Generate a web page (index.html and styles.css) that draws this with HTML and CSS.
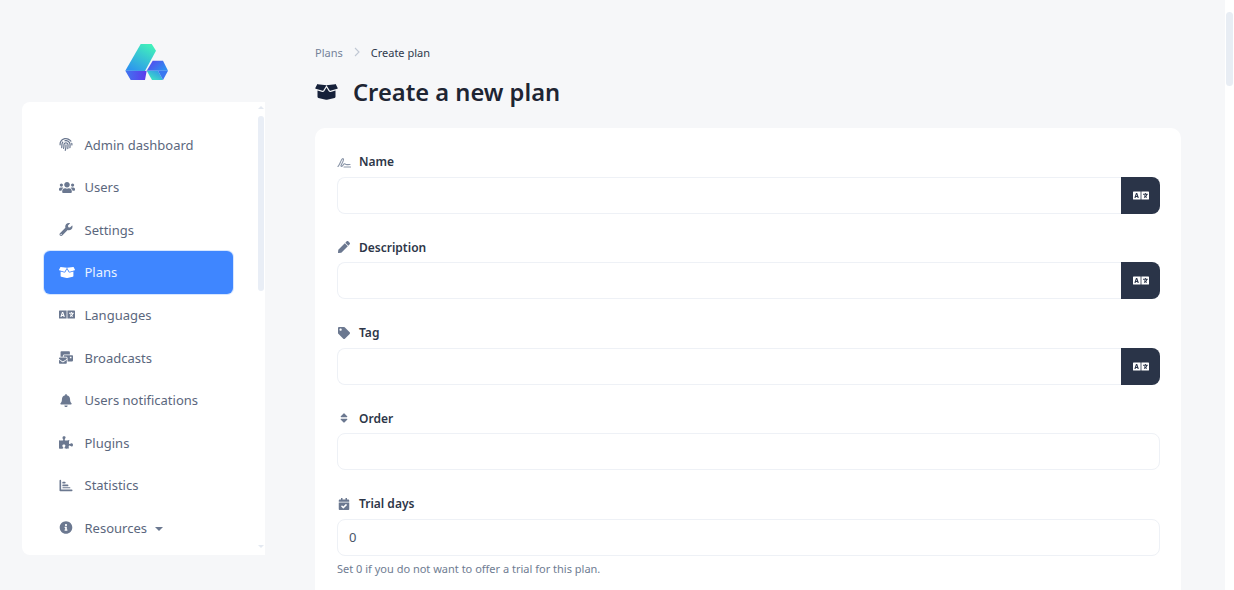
FILE: index.html
```html
<!DOCTYPE html>
<html lang="en">
<head>
<meta charset="utf-8">
<title>Create plan</title>
<link rel="stylesheet" href="styles.css">
</head>
<body>
<svg class="sprite" xmlns="http://www.w3.org/2000/svg">
  <defs>
    <symbol id="i-box" viewBox="0 0 640 512"><path d="M425.7 256c-16.9 0-32.8-9-41.4-23.4L320 126l-64.2 106.6c-8.7 14.5-24.6 23.5-41.5 23.5-4.5 0-9-.6-13.3-1.9L64 215v178c0 14.7 10 27.5 24.2 31l216.2 54.1c10.2 2.5 20.9 2.5 31 0L551.8 424c14.2-3.6 24.2-16.4 24.2-31V215l-137 39.1c-4.3 1.3-8.8 1.9-13.3 1.9zm212.6-112.2L586.8 41c-3.1-6.2-9.8-9.8-16.7-8.9L320 64l91.7 152.1c3.8 6.3 11.4 9.3 18.5 7.3l197.9-56.5c9.9-2.9 14.7-13.9 10.2-23.1zM53.2 41L1.7 143.8c-4.6 9.2.3 20.2 10.1 23l197.9 56.5c7.1 2 14.7-1 18.5-7.3L320 64 69.8 32.1c-6.9-.8-13.5 2.7-16.6 8.9z"/></symbol>
    <symbol id="i-finger" viewBox="0 0 512 512"><path d="M256.12 245.96c-13.25 0-24 10.74-24 24 1.14 72.25-8.14 141.9-27.7 211.55-2.73 9.72 2.15 30.49 23.12 30.49 10.48 0 20.11-6.92 23.09-17.52 13.53-47.91 31.04-125.41 29.48-224.52.01-13.25-10.73-24-23.99-24zm-.86-81.73C194 164.16 151.25 211.3 152.1 265.32c.75 47.94-3.75 95.91-13.37 142.55-2.69 12.98 5.67 25.69 18.64 28.36 13.05 2.67 25.67-5.66 28.36-18.64 10.34-50.09 15.17-101.58 14.37-153.02-.41-25.95 19.92-52.49 54.45-52.34 31.31.47 57.15 25.34 57.62 55.47.77 48.05-2.81 96.33-10.61 143.55-2.17 13.06 6.69 25.42 19.76 27.58 19.97 3.33 26.81-15.1 27.58-19.77 8.28-50.03 12.06-101.21 11.27-152.11-.88-55.8-47.94-101.88-104.91-102.72zm-110.69-19.78c-10.3-8.34-25.37-6.8-33.76 3.48-25.62 31.5-39.39 71.28-38.75 112 .59 37.58-2.47 75.27-9.11 112.05-2.34 13.05 6.31 25.53 19.36 27.89 20.11 3.5 27.07-14.81 27.89-19.36 7.19-39.84 10.5-80.66 9.86-121.33-.47-29.88 9.2-57.88 28-80.97 8.35-10.28 6.79-25.39-3.49-33.76zm109.47-62.33c-15.41-.41-30.87 1.44-45.78 4.97-12.89 3.06-20.87 15.98-17.83 28.89 3.06 12.89 16 20.83 28.89 17.83 11.05-2.61 22.47-3.77 34-3.69 75.43 1.13 137.73 61.5 138.88 134.58.59 37.88-1.28 76.11-5.58 113.63-1.5 13.17 7.95 25.08 21.11 26.58 16.72 1.95 25.51-11.88 26.58-21.11a929.06 929.06 0 0 0 5.89-119.85c-1.56-98.75-85.07-180.33-186.16-181.83zm252.07 121.45c-2.86-12.92-15.51-21.2-28.61-18.27-12.94 2.86-21.12 15.66-18.26 28.61 4.71 21.41 4.91 37.41 4.7 61.6-.11 13.27 10.55 24.09 23.8 24.2h.2c13.17 0 23.89-10.61 24-23.8.18-22.18.4-44.11-5.83-72.34zm-40.12-90.72C417.29 43.46 337.6 1.29 252.81.02 183.02-.82 118.47 24.91 70.46 72.94 24.09 119.37-.9 181.04.14 246.65l-.12 21.47c-.39 13.25 10.03 24.31 23.28 24.69.23.02.48.02.72.02 12.92 0 23.59-10.3 23.97-23.3l.16-23.64c-.83-52.5 19.16-101.86 56.28-139 38.76-38.8 91.34-59.67 147.68-58.86 69.45 1.03 134.73 35.56 174.62 92.39 7.61 10.86 22.56 13.45 33.42 5.86 10.84-7.62 13.47-22.59 5.84-33.43z"/></symbol>
    <symbol id="i-users" viewBox="0 0 640 512"><path d="M96 224c35.3 0 64-28.7 64-64s-28.7-64-64-64-64 28.7-64 64 28.7 64 64 64zm448 0c35.3 0 64-28.7 64-64s-28.7-64-64-64-64 28.7-64 64 28.7 64 64 64zm32 32h-64c-17.6 0-33.5 7.1-45.1 18.6 40.3 22.1 68.9 62 75.1 109.4h66c17.7 0 32-14.3 32-32v-32c0-35.3-28.7-64-64-64zm-256 0c61.9 0 112-50.1 112-112S381.9 32 320 32 208 82.1 208 144s50.1 112 112 112zm76.8 32h-8.3c-20.8 10-43.9 16-68.5 16s-47.6-6-68.5-16h-8.3C179.6 288 128 339.6 128 403.2V432c0 26.5 21.5 48 48 48h288c26.5 0 48-21.5 48-48v-28.8c0-63.6-51.6-115.2-115.2-115.2zm-223.7-13.4C161.5 263.1 145.6 256 128 256H64c-35.3 0-64 28.7-64 64v32c0 17.7 14.3 32 32 32h65.9c6.3-47.4 34.9-87.3 75.2-109.4z"/></symbol>
    <symbol id="i-wrench" viewBox="0 0 512 512"><path d="M507.73 109.1c-2.24-9.03-13.54-12.09-20.12-5.51l-74.36 74.36-67.88-11.31-11.31-67.88 74.36-74.36c6.62-6.62 3.43-17.9-5.66-20.16-47.38-11.74-99.55.91-136.58 37.93-39.64 39.64-50.55 97.1-34.05 147.2L18.74 402.76c-24.99 24.99-24.99 65.51 0 90.5 24.99 24.99 65.51 24.99 90.5 0l213.21-213.21c50.12 16.71 107.47 5.68 147.37-34.22 37.07-37.07 49.7-89.32 37.91-136.73zM64 472c-13.25 0-24-10.75-24-24 0-13.26 10.75-24 24-24s24 10.74 24 24c0 13.25-10.75 24-24 24z"/></symbol>
    <symbol id="i-lang" viewBox="0 0 640 512"><path d="M152.1 236.2c-3.5-12.1-7.8-33.2-7.8-33.2h-.5s-4.3 21.1-7.8 33.2l-11.1 37.5H163zM616 96H336v320h280c13.3 0 24-10.7 24-24V120c0-13.3-10.7-24-24-24zm-24 120c0 6.6-5.4 12-12 12h-11.4c-6.9 23.6-21.7 47.4-42.7 69.9 8.4 6.4 17.1 12.5 26.1 18 5.5 3.4 7.3 10.5 4.1 16.2l-7.9 13.9c-3.4 5.9-10.9 7.8-16.7 4.3-12.6-7.8-24.5-16.1-35.4-24.9-10.9 8.7-22.7 17.1-35.4 24.9-5.8 3.5-13.3 1.6-16.7-4.3l-7.9-13.9c-3.2-5.6-1.4-12.8 4.2-16.2 9.3-5.7 18-11.7 26.1-18-7.9-8.4-14.9-17-21-25.7-4-5.7-2.2-13.6 3.7-17.1l6.5-3.9 7.3-4.3c5.4-3.2 12.4-1.7 16 3.4 5 7 10.8 14 17.4 20.9 13.5-14.2 23.8-28.9 30-43.2H412c-6.6 0-12-5.4-12-12v-16c0-6.6 5.4-12 12-12h64v-16c0-6.6 5.4-12 12-12h16c6.6 0 12 5.4 12 12v16h64c6.6 0 12 5.4 12 12zM0 120v272c0 13.3 10.7 24 24 24h280V96H24c-13.3 0-24 10.7-24 24zm58.9 216.1L116.4 167c1.7-4.9 6.2-8.1 11.4-8.1h32.5c5.1 0 9.7 3.3 11.4 8.1l57.5 169.1c2.6 7.8-3.1 15.9-11.4 15.9h-22.9a12 12 0 0 1-11.5-8.6l-9.4-31.9h-60.2l-9.1 31.8c-1.5 5.1-6.2 8.7-11.5 8.7H70.3c-8.2 0-14-8.1-11.4-15.9z"/></symbol>
    <symbol id="i-mail" viewBox="0 0 576 512"><path d="M160 448c-25.6 0-51.2-22.4-64-32-64-44.8-83.2-60.8-96-70.4V480c0 17.67 14.33 32 32 32h256c17.67 0 32-14.33 32-32V345.6c-12.8 9.6-32 25.6-96 70.4-12.8 9.6-38.4 32-64 32zm128-192H32c-17.67 0-32 14.33-32 32v16c25.6 19.2 22.4 19.2 115.2 86.4 9.6 6.4 28.8 25.6 44.8 25.6s35.2-19.2 44.8-22.4c92.8-67.2 89.6-67.2 115.2-89.6V288c0-17.67-14.33-32-32-32zm256-96H224c-17.67 0-32 14.33-32 32v32h96c33.21 0 60.59 25.42 63.71 57.82l.29-.22V416h192c17.67 0 32-14.33 32-32V192c0-17.67-14.33-32-32-32zm-32 128h-64v-64h64v64zm-352-96c0-35.29 28.71-64 64-64h224V32c0-17.67-14.33-32-32-32H96C78.33 0 64 14.33 64 32v192h96v-32z"/></symbol>
    <symbol id="i-bell" viewBox="0 0 448 512"><path d="M224 512c35.32 0 63.97-28.65 63.97-64H160.03c0 35.35 28.65 64 63.97 64zm215.39-149.71c-19.32-20.76-55.47-51.99-55.47-154.29 0-77.7-54.48-139.9-127.94-155.16V32c0-17.67-14.32-32-31.98-32s-31.98 14.33-31.98 32v20.84C118.56 68.1 64.08 130.3 64.08 208c0 102.3-36.15 133.53-55.47 154.29-6 6.45-8.66 14.16-8.61 21.71.11 16.4 12.98 32 32.1 32h383.8c19.12 0 32-15.6 32.1-32 .05-7.55-2.61-15.27-8.61-21.71z"/></symbol>
    <symbol id="i-puzzle" viewBox="0 0 576 512"><path d="M519.442 288.651c-41.519 0-59.5 31.593-82.058 31.593C377.409 320.244 432 144 432 144s-196.288 80-196.288-3.297c0-35.827 36.288-46.25 36.288-85.985C272 19.216 243.885 0 210.539 0c-34.654 0-66.366 18.891-66.366 56.346 0 41.364 31.711 59.277 31.711 81.75C175.885 207.719 0 166.758 0 166.758v333.237s178.635 41.047 178.635-28.662c0-22.473-40-40.107-40-81.471 0-37.456 29.25-56.346 63.577-56.346 33.673 0 61.788 19.216 61.788 54.717 0 39.735-36.288 50.158-36.288 85.985 0 60.803 129.675 25.73 181.23 25.73 0 0-34.725-120.101 25.827-120.101 35.962 0 46.423 36.152 86.308 36.152C556.712 416 576 387.99 576 354.443c0-34.199-18.962-65.792-56.558-65.792z"/></symbol>
    <symbol id="i-chart" viewBox="0 0 512 512"><path d="M0 64a32 32 0 0 1 64 0v352h416a32 32 0 0 1 0 64H32a32 32 0 0 1-32-32zM112 130a24 24 0 0 1 24-24h70a24 24 0 0 1 0 72h-70a24 24 0 0 1-24-24zM112 240a24 24 0 0 1 24-24h180a24 24 0 0 1 0 72H136a24 24 0 0 1-24-24zM112 344a24 24 0 0 1 24-24h270a24 24 0 0 1 0 48H136a24 24 0 0 1-24-24z"/></symbol>
    <symbol id="i-info" viewBox="0 0 512 512"><path d="M256 8C119.043 8 8 119.083 8 256c0 136.997 111.043 248 248 248s248-111.003 248-248C504 119.083 392.957 8 256 8zm0 110c23.196 0 42 18.804 42 42s-18.804 42-42 42-42-18.804-42-42 18.804-42 42-42zm56 254c0 6.627-5.373 12-12 12h-88c-6.627 0-12-5.373-12-12v-24c0-6.627 5.373-12 12-12h12v-64h-12c-6.627 0-12-5.373-12-12v-24c0-6.627 5.373-12 12-12h64c6.627 0 12 5.373 12 12v100h12c6.627 0 12 5.373 12 12v24z"/></symbol>
    <symbol id="i-sign" viewBox="0 0 14 12"><path d="M1 10.500C2.500 9 3 7 4.200 4.500 5 2.500 6.300 2 6.500 3.300 6.700 5 4.500 8 4 9.500 3.700 10.800 5.200 10.500 6 9.300 7 7.800 8 7.300 8.500 8.200 9 9 10.500 8.500 13 8.500M7 11h6.500" fill="none" stroke="currentColor" stroke-width="1.100" stroke-linecap="round"/></symbol>
    <symbol id="i-pen" viewBox="0 0 512 512"><path d="M290.74 93.24l128.02 128.02-277.99 277.99-114.14 12.6C11.35 513.54-1.56 500.62.14 485.34l12.7-114.22 277.9-277.88zm207.2-19.06l-60.11-60.11c-18.75-18.75-49.16-18.75-67.91 0l-56.55 56.55 128.02 128.02 56.55-56.55c18.75-18.76 18.75-49.16 0-67.91z"/></symbol>
    <symbol id="i-tag" viewBox="0 0 512 512"><path d="M0 252.118V48C0 21.49 21.49 0 48 0h204.118a48 48 0 0 1 33.941 14.059l211.882 211.882c18.745 18.745 18.745 49.137 0 67.882L293.823 497.941c-18.745 18.745-49.137 18.745-67.882 0L14.059 286.059A48 48 0 0 1 0 252.118zM112 64c-26.51 0-48 21.49-48 48s21.49 48 48 48 48-21.49 48-48-21.49-48-48-48z"/></symbol>
    <symbol id="i-sort" viewBox="0 0 320 512"><path d="M41 288h238c21.4 0 32.1 25.9 17 41L177 448c-9.4 9.4-24.6 9.4-33.9 0L24 329c-15.1-15.1-4.4-41 17-41zm255-105L177 64c-9.4-9.4-24.6-9.4-33.9 0L24 183c-15.1 15.1-4.4 41 17 41h238c21.4 0 32.1-25.9 17-41z"/></symbol>
    <symbol id="i-cal" viewBox="0 0 448 512"><path d="M436 160H12c-6.627 0-12-5.373-12-12v-36c0-26.51 21.49-48 48-48h48V12c0-6.627 5.373-12 12-12h40c6.627 0 12 5.373 12 12v52h128V12c0-6.627 5.373-12 12-12h40c6.627 0 12 5.373 12 12v52h48c26.51 0 48 21.49 48 48v36c0 6.627-5.373 12-12 12zM12 192h424c6.627 0 12 5.373 12 12v260c0 26.51-21.49 48-48 48H48c-26.51 0-48-21.49-48-48V204c0-6.627 5.373-12 12-12zm333.296 95.947l-28.169-28.398c-4.667-4.705-12.265-4.736-16.970-.068L194.12 364.665l-45.98-46.352c-4.667-4.705-12.266-4.736-16.971-.068l-28.397 28.17c-4.705 4.667-4.736 12.265-.068 16.970l82.601 83.269c4.667 4.705 12.265 4.736 16.970.068l142.953-141.805c4.705-4.667 4.736-12.265.068-16.970z"/></symbol>
  </defs>
</svg>

<div class="app">
  <div class="side-col">
    <div class="logo-box">
      <svg class="logo" viewBox="0 0 43 37" aria-hidden="true">
        <defs>
          <linearGradient id="g-bar" x1="0.1" y1="1" x2="0.75" y2="0"><stop offset="0" stop-color="#2b8ff2"/><stop offset="1" stop-color="#41f0bb"/></linearGradient>
          <linearGradient id="g-small" x1="0" y1="0" x2="1" y2="0.5"><stop offset="0" stop-color="#5b3fee"/><stop offset="1" stop-color="#2f8df0"/></linearGradient>
          <linearGradient id="g-teal" x1="1" y1="0" x2="0" y2="1"><stop offset="0" stop-color="#2f8df0"/><stop offset="1" stop-color="#41f0bb"/></linearGradient>
          <linearGradient id="g-under" x1="0" y1="0" x2="1" y2="0"><stop offset="0" stop-color="#3f76f0"/><stop offset="1" stop-color="#5e38ec"/></linearGradient>
        </defs>
        <polygon points="15.700,1 26.700,1 31,7.700 20,28 0.300,27.700" fill="url(#g-bar)"/>
        <polygon points="0.300,27.700 20,28 21.700,27.700 20,37 5.700,37" fill="url(#g-under)"/>
        <polygon points="27.700,17.700 38,17.700 43,27.700 33,27.700 21.700,27.700" fill="url(#g-small)"/>
        <polygon points="21.700,27.700 33,27.700 38,37 27,37" fill="url(#g-teal)"/>
        <polygon points="33,27.700 43,27.700 38,37" fill="#3a78f0"/>
      </svg>
    </div>
    <aside class="sidebar">
      <nav class="nav">
        <a class="nav-item"><span class="nav-icon"><svg class="ic ic-14"><use href="#i-finger"/></svg></span><span>Admin dashboard</span></a>
        <a class="nav-item"><span class="nav-icon"><svg class="ic ic-16"><use href="#i-users"/></svg></span><span>Users</span></a>
        <a class="nav-item"><span class="nav-icon"><svg class="ic ic-14"><use href="#i-wrench"/></svg></span><span>Settings</span></a>
        <a class="nav-item active"><span class="nav-icon"><svg class="ic ic-16"><use href="#i-box"/></svg></span><span>Plans</span></a>
        <a class="nav-item"><span class="nav-icon"><svg class="ic ic-16"><use href="#i-lang"/></svg></span><span>Languages</span></a>
        <a class="nav-item"><span class="nav-icon"><svg class="ic ic-14"><use href="#i-mail"/></svg></span><span>Broadcasts</span></a>
        <a class="nav-item"><span class="nav-icon"><svg class="ic ic-14"><use href="#i-bell"/></svg></span><span>Users notifications</span></a>
        <a class="nav-item"><span class="nav-icon"><svg class="ic ic-14"><use href="#i-puzzle"/></svg></span><span>Plugins</span></a>
        <a class="nav-item"><span class="nav-icon"><svg class="ic ic-14"><use href="#i-chart"/></svg></span><span>Statistics</span></a>
        <a class="nav-item"><span class="nav-icon"><svg class="ic ic-14"><use href="#i-info"/></svg></span><span>Resources</span><span class="caret"></span></a>
      </nav>
      <div class="side-track">
        <span class="arrow-up"></span>
        <span class="side-thumb"></span>
        <span class="arrow-down"></span>
      </div>
    </aside>
  </div>

  <main class="main">
    <div class="crumbs">
      <span class="crumb">Plans</span>
      <svg class="crumb-sep" viewBox="0 0 6 10"><path d="M1 1l4 4-4 4" fill="none" stroke="currentColor" stroke-width="1.100"/></svg>
      <span class="crumb-current">Create plan</span>
    </div>
    <h1 class="title"><svg class="title-icon"><use href="#i-box"/></svg><span>Create a new plan</span></h1>
    <form class="card">
      <div class="group">
        <label class="label"><svg class="lab-ic lab-ic-light"><use href="#i-sign"/></svg><span>Name</span></label>
        <div class="input-row"><div class="input joined"></div><div class="addon"><svg class="addon-ic"><use href="#i-lang"/></svg></div></div>
      </div>
      <div class="group">
        <label class="label"><svg class="lab-ic"><use href="#i-pen"/></svg><span>Description</span></label>
        <div class="input-row"><div class="input joined"></div><div class="addon"><svg class="addon-ic"><use href="#i-lang"/></svg></div></div>
      </div>
      <div class="group">
        <label class="label"><svg class="lab-ic"><use href="#i-tag"/></svg><span>Tag</span></label>
        <div class="input-row"><div class="input joined"></div><div class="addon"><svg class="addon-ic"><use href="#i-lang"/></svg></div></div>
      </div>
      <div class="group">
        <label class="label"><svg class="lab-ic"><use href="#i-sort"/></svg><span>Order</span></label>
        <div class="input-row"><div class="input"></div></div>
      </div>
      <div class="group">
        <label class="label"><svg class="lab-ic"><use href="#i-cal"/></svg><span>Trial days</span></label>
        <div class="input-row"><div class="input">0</div></div>
        <p class="help">Set 0 if you do not want to offer a trial for this plan.</p>
      </div>
    </form>
  </main>

  <div class="page-track"><span class="page-thumb"></span></div>
</div>
</body>
</html>
```

FILE: styles.css
```css
* { box-sizing: border-box; }
html, body { margin: 0; height: 100%; overflow: hidden; }
body {
  background: #f6f7f9;
  font-family: "Noto Sans", "Open Sans", sans-serif;
  color: #1e2533;
}
.sprite { display: none; }
svg { fill: currentColor; }

.app { display: flex; height: 590px; overflow: hidden; }

.side-col { flex: 0 0 265px; padding-left: 22px; display: flex; flex-direction: column; }
.logo-box { height: 102px; display: flex; justify-content: center; align-items: flex-start; padding: 43px 0 0 6px; }
.logo { width: 43px; height: 37px; }

.sidebar {
  height: 453px;
  background: #fff;
  border-radius: 8px 0 0 8px;
  display: flex;
  overflow: hidden;
}
.nav { flex: 1; padding: 21.5px 24px 0 21.5px; }
.nav-item {
  display: flex;
  align-items: center;
  height: 42.55px;
  padding-left: 15px;
  font-size: 13px;
  color: #5b677d;
  border-radius: 6px;
}
.nav-item.active { background: #3f86ff; color: #eaf2ff; box-shadow: 0 0 0 1px #d6e6ff; }
.nav-icon { flex: 0 0 26px; width: 26px; display: flex; align-items: center; color: #6b7890; }
.active .nav-icon { color: #fff; }
.ic-16 { width: 16px; height: 13px; }
.ic-14 { width: 14px; height: 13px; }
.caret {
  margin: 2px 0 0 8px;
  border-left: 4.500px solid transparent;
  border-right: 4.500px solid transparent;
  border-top: 4.500px solid #6b7890;
}

.side-track {
  flex: 0 0 8px;
  display: flex;
  flex-direction: column;
  align-items: center;
  padding-top: 4px;
}
.arrow-up { border: 3px solid transparent; border-top: 0; border-bottom: 3px solid #e4e9f1; }
.side-thumb { width: 6px; height: 175px; margin-top: 7px; background: #e9eef6; border-radius: 3px; }
.arrow-down { margin-top: 254px; border: 3px solid transparent; border-bottom: 0; border-top: 3px solid #e4e9f1; }

.main { flex: 0 0 916px; padding: 0 0 0 50px; }
.crumbs { display: flex; align-items: center; height: 20px; margin-top: 42px; font-size: 11px; }
.crumb { color: #75829a; }
.crumb-sep { width: 6px; height: 10px; margin: 0 11px 0 11px; color: #c0c8d4; }
.crumb-current { color: #2f3a4d; }
.title {
  display: flex;
  align-items: center;
  height: 36px;
  margin: 12px 0 0;
  font-size: 23.7px;
  font-weight: 600;
  color: #1e2533;
}
.title-icon { width: 23px; height: 18px; margin-right: 15px; color: #16213a; }

.card {
  margin-top: 18px;
  width: 866px;
  background: #fff;
  border-radius: 10px;
  padding: 23px 21px 40px 22px;
}
.group { margin-bottom: 23px; }
.label {
  display: flex;
  align-items: center;
  height: 20px;
  padding-top: 1px;
  margin-bottom: 5.500px;
  font-size: 12px;
  font-weight: 600;
  color: #2d3648;
}
.lab-ic { width: 14px; height: 12px; margin-right: 8px; color: #6b7890; }
.lab-ic-light { color: #8a95a8; }
.input-row { display: flex; height: 37px; }
.input {
  flex: 1;
  display: flex;
  align-items: center;
  padding: 0 11px;
  font-size: 13px;
  color: #4a5568;
  background: #fff;
  border: 1px solid #eef1f6;
  border-radius: 8px;
}
.input.joined { border-radius: 8px 0 0 8px; border-right: 0; }
.addon {
  flex: 0 0 39px;
  display: flex;
  align-items: center;
  justify-content: center;
  background: #2a3448;
  border-radius: 0 8px 8px 0;
  color: #fff;
}
.addon-ic { width: 16px; height: 13px; }
.help { margin: 5px 0 0; font-size: 11px; color: #6f7c92; }

.page-track { flex: 0 0 9px; margin-left: 44px; background: #fff; padding: 12px 1px 0; }
.page-thumb { display: block; height: 74px; background: #e8edf4; border-radius: 4px; }
```
